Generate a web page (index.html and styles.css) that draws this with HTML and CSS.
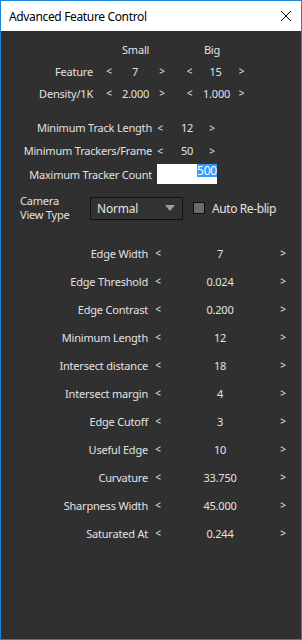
FILE: index.html
```html
<!DOCTYPE html>
<html lang="en">

<head>
    <meta charset="UTF-8">
    <meta name="viewport" content="width=device-width, initial-scale=1.0">
    <title>Advanced Feature Control</title>
    <link rel="stylesheet" href="styles.css">
</head>

<body>
    <div class="window">
        <div class="titlebar">
            <span class="title">Advanced Feature Control</span>
            <svg class="close" width="12" height="12" viewBox="0 0 12 12">
                <path d="M1 1 L11 11 M11 1 L1 11" stroke="#000" stroke-width="1" fill="none" />
            </svg>
        </div>

        <div class="content">
            <!-- Small / Big -->
            <div class="size-grid">
                <span></span><span></span>
                <span class="head">Small</span>
                <span></span><span></span>
                <span class="head big">Big</span>
                <span></span>

                <span class="label">Feature</span>
                <span class="arr">&lt;</span><span class="val">7</span><span class="arr">&gt;</span>
                <span class="arr">&lt;</span><span class="val">15</span><span class="arr">&gt;</span>

                <span class="label">Density/1K</span>
                <span class="arr">&lt;</span><span class="val">2.000</span><span class="arr">&gt;</span>
                <span class="arr">&lt;</span><span class="val">1.000</span><span class="arr">&gt;</span>
            </div>

            <!-- Trackers -->
            <div class="track-grid">
                <span class="label">Minimum Track Length</span>
                <span class="arr">&lt;</span><span class="val">12</span><span class="arr">&gt;</span>

                <span class="label">Minimum Trackers/Frame</span>
                <span class="arr">&lt;</span><span class="val">50</span><span class="arr">&gt;</span>
            </div>

            <div class="count-row">
                <span class="label">Maximum Tracker Count</span>
                <div class="count-input"><span class="selected">500</span></div>
            </div>

            <div class="camera-row">
                <span class="camera-label">Camera<br>View Type</span>
                <div class="dropdown">
                    <span>Normal</span>
                    <svg width="10" height="6" viewBox="0 0 10 6">
                        <path d="M0 0 L10 0 L5 6 Z" fill="#9c9c9c" />
                    </svg>
                </div>
                <span class="checkbox"></span>
                <span class="check-label">Auto Re-blip</span>
            </div>

            <!-- Edge settings -->
            <div class="edge-grid" id="edgeGrid"></div>
        </div>
    </div>

    <script>
        const edges = [
            ['Edge Width', '7'],
            ['Edge Threshold', '0.024'],
            ['Edge Contrast', '0.200'],
            ['Minimum Length', '12'],
            ['Intersect distance', '18'],
            ['Intersect margin', '4'],
            ['Edge Cutoff', '3'],
            ['Useful Edge', '10'],
            ['Curvature', '33.750'],
            ['Sharpness Width', '45.000'],
            ['Saturated At', '0.244']
        ];

        const edgeGrid = document.getElementById('edgeGrid');
        edges.forEach(([name, value]) => {
            edgeGrid.insertAdjacentHTML('beforeend',
                `<span class="label">${name}</span>` +
                `<span class="arr">&lt;</span>` +
                `<span class="val">${value}</span>` +
                `<span class="arr">&gt;</span>`);
        });
    </script>
</body>

</html>
```

FILE: styles.css
```css
/* General */
body {
    margin: 0;
    font-family: 'Noto Sans', 'Open Sans', sans-serif;
    font-size: 11px;
    letter-spacing: -0.2px;
}

.window {
    width: 302px;
    height: 640px;
    box-sizing: border-box;
    border: 1px solid #1883d7;
    display: flex;
    flex-direction: column;
}

/* Title bar */
.titlebar {
    height: 30px;
    background-color: #fff;
    display: flex;
    align-items: center;
    justify-content: space-between;
    padding: 0 9px 0 8px;
}

.title {
    font-size: 12px;
    letter-spacing: -0.35px;
    color: #000;
}

.close {
    display: block;
}

/* Content */
.content {
    flex: 1;
    background-color: #303030;
    color: #e2e2e2;
    padding-top: 7px;
}

.label {
    text-align: right;
    white-space: nowrap;
}

.val,
.arr,
.head {
    text-align: center;
}

.arr {
    font-size: 10px;
}

/* Small / Big */
.size-grid {
    display: grid;
    grid-template-columns: 95px 26px 26px 28px 27px 25px 27px;
    grid-auto-rows: 22px;
    align-items: center;
}

.size-grid .label {
    padding-right: 3px;
}

.head.big {
    padding-right: 7px;
}

/* Trackers */
.track-grid {
    display: grid;
    grid-template-columns: 151px 16px 38px 12px;
    grid-auto-rows: 23px;
    align-items: center;
    margin-top: 12px;
}

.count-row {
    display: flex;
    align-items: center;
    height: 24px;
}

.count-row .label {
    width: 151px;
}

.count-input {
    width: 60px;
    height: 20px;
    margin-left: 5px;
    background-color: #fff;
    display: flex;
    justify-content: flex-end;
    align-items: flex-start;
}

.selected {
    background-color: #3399ff;
    color: #fff;
    font-size: 12px;
    line-height: 13px;
}

/* Camera row */
.camera-row {
    display: flex;
    align-items: center;
    height: 28px;
    margin-top: 8px;
    padding-left: 19px;
}

.camera-label {
    line-height: 14px;
    width: 70px;
}

.dropdown {
    width: 93px;
    height: 23px;
    box-sizing: border-box;
    border: 1px solid #111;
    background-color: #323232;
    display: flex;
    align-items: center;
    justify-content: space-between;
    padding: 0 7px 0 6px;
    font-size: 12px;
}

.checkbox {
    width: 10px;
    height: 10px;
    border: 1px solid #0e0e0e;
    background-color: #6b6b6b;
    margin-left: 10px;
}

.check-label {
    margin-left: 7px;
    font-size: 12px;
    letter-spacing: -0.4px;
}

/* Edge settings */
.edge-grid {
    display: grid;
    grid-template-columns: 150px 14px 110px 16px;
    grid-auto-rows: 28px;
    align-items: center;
    margin-top: 17px;
}

.edge-grid .label {
    padding-right: 3px;
}
```
